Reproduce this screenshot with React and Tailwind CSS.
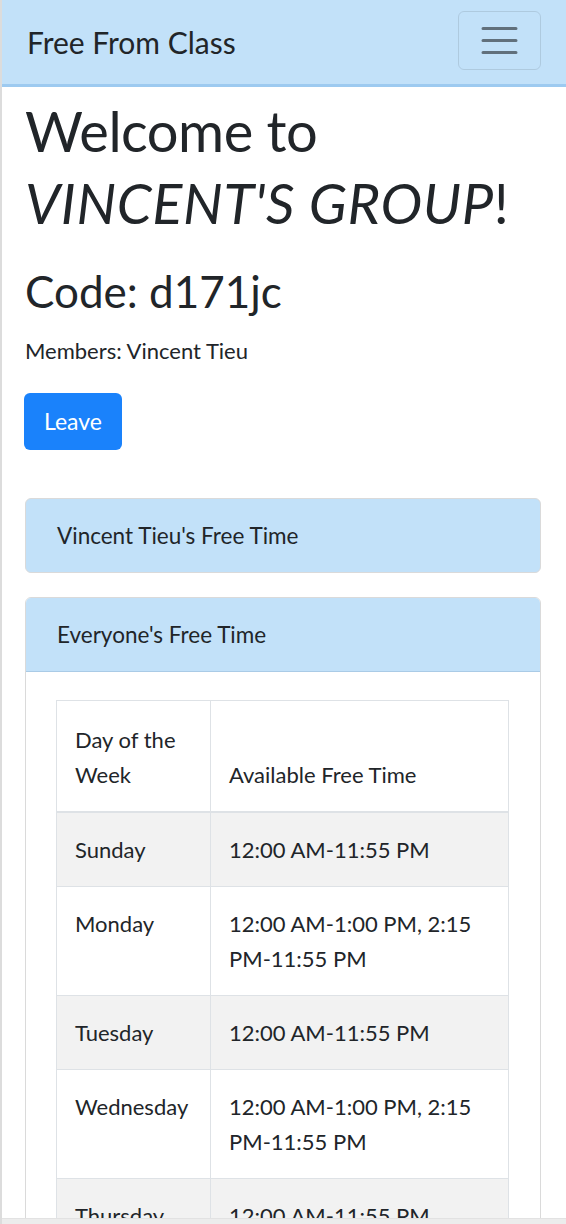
import React from 'react';

const rows = [
  { day: 'Sunday', time: '12:00 AM-11:55 PM' },
  { day: 'Monday', time: '12:00 AM-1:00 PM, 2:15 PM-11:55 PM' },
  { day: 'Tuesday', time: '12:00 AM-11:55 PM' },
  { day: 'Wednesday', time: '12:00 AM-1:00 PM, 2:15 PM-11:55 PM' },
  { day: 'Thursday', time: '12:00 AM-11:55 PM' },
  { day: 'Friday', time: '12:00 AM-11:55 PM' },
  { day: 'Saturday', time: '12:00 AM-11:55 PM' },
];

function TimeText({ time }) {
  // keep the second range's tail together so it wraps after "2:15"
  const idx = time.indexOf(' PM-11:55');
  if (time.includes(',') && idx > 0) {
    return (
      <>
        {time.slice(0, idx)}{' '}
        <span className="whitespace-nowrap">{time.slice(idx + 1)}</span>
      </>
    );
  }
  return time;
}

export default function App() {
  return (
    <div className="relative h-[1224px] overflow-hidden bg-white border-l-2 border-[#dcdcdc] text-[#212529] font-['Lato','Liberation_Sans',sans-serif]">
      <nav className="flex items-center justify-between h-[87px] pl-[25px] pr-[25px] pb-[3px] bg-[#c2e1f9] border-b-[3px] border-[#9dcaf0]">
        <span className="text-[30px] leading-none mt-[2px]">Free From Class</span>
        <button className="w-[83px] h-[59px] flex items-center justify-center border border-black/10 rounded-[6px]">
          <svg width="45" height="45" viewBox="0 0 30 30">
            <path d="M4 7h22M4 15h22M4 23h22" stroke="rgba(0,0,0,0.5)" strokeWidth="2" strokeLinecap="round" />
          </svg>
        </button>
      </nav>

      <main className="pl-[22px] pr-[24px]">
        <h1 className="mt-[8px] ml-[1px] text-[56px] leading-[72px] tracking-[-0.5px]">
          Welcome to <em className="italic tracking-[0.6px]">VINCENT'S GROUP</em>!
        </h1>
        <h2 className="mt-[25px] ml-[1px] text-[44px] leading-[54px]">Code: d171jc</h2>
        <p className="mt-[16px] ml-[1px] text-[22px] leading-[33px]">Members: Vincent Tieu</p>
        <button className="mt-[26px] w-[98px] h-[57px] rounded-[6px] bg-[#1a82fb] text-white text-[23px]">
          Leave
        </button>

        <div className="mt-[48px] mx-[1px] flex flex-col gap-[24px]">
          <div className="h-[75px] flex items-center px-[31px] bg-[#c2e1f9] border border-[#dadada] rounded-[6px] text-[22.5px]">
            Vincent Tieu's Free Time
          </div>

          <div className="border border-[#dadada] rounded-[6px] overflow-hidden">
            <div className="h-[74px] flex items-center px-[31px] bg-[#c2e1f9] border-b border-[#aacbe6] text-[22.5px]">
              Everyone's Free Time
            </div>
            <div className="pt-[28px] px-[30px] pb-[30px]">
              <table className="w-[453px] table-fixed border-collapse text-[22px] leading-[35px]">
                <colgroup>
                  <col className="w-[154px]" />
                  <col />
                </colgroup>
                <thead>
                  <tr>
                    <th className="font-normal text-left align-bottom px-[18px] pt-[21px] pb-[19px] border border-[#dee2e6] border-b-2">
                      Day of the Week
                    </th>
                    <th className="font-normal text-left align-bottom px-[18px] pt-[21px] pb-[19px] border border-[#dee2e6] border-b-2">
                      Available Free Time
                    </th>
                  </tr>
                </thead>
                <tbody>
                  {rows.map((r, i) => (
                    <tr key={r.day} className={i % 2 === 0 ? 'bg-[#f2f2f2]' : 'bg-white'}>
                      <td className="align-top px-[18px] py-[19px] border border-[#dee2e6]">{r.day}</td>
                      <td className="align-top px-[18px] py-[19px] border border-[#dee2e6]">
                        <TimeText time={r.time} />
                      </td>
                    </tr>
                  ))}
                </tbody>
              </table>
            </div>
          </div>
        </div>
      </main>

      <div className="absolute left-0 right-0 bottom-0 h-[6px] bg-[#ececec] border-t border-[#e2e2e2]" />
    </div>
  );
}
